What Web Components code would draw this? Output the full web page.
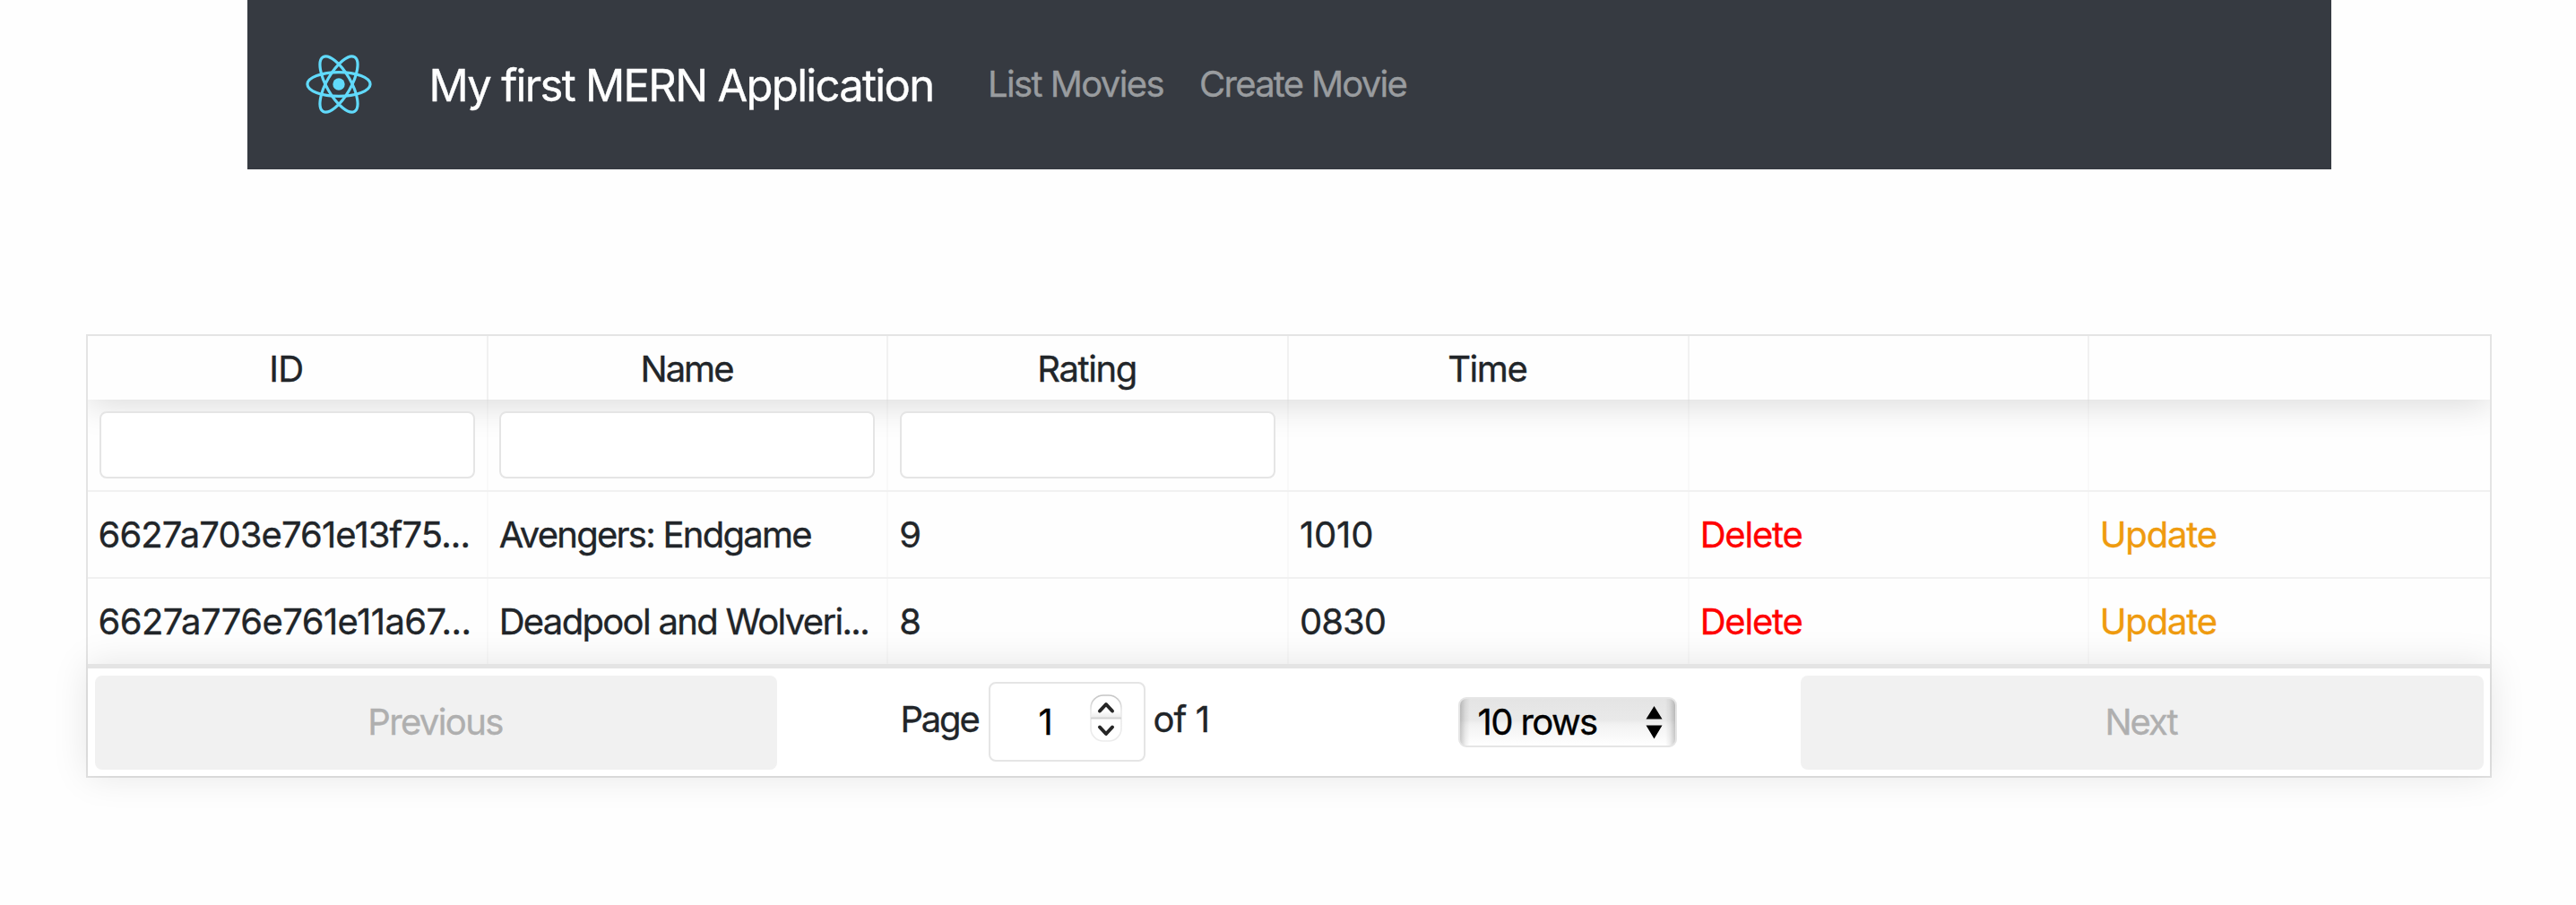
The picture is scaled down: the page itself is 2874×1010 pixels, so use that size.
<!DOCTYPE html>
<html lang="en">
<head>
<meta charset="utf-8">
<title>My first MERN Application</title>
<style>
body{margin:0;background:#fefefe;font:40px/60px Inter,"Liberation Sans",sans-serif;color:#212529;width:2874px;height:1010px;overflow:hidden;-webkit-text-stroke:.35px currentColor}
</style>
</head>
<body>
<movies-page></movies-page>
<script>
const define=(name,html,setup)=>customElements.define(name,class extends HTMLElement{
  constructor(){super();this.attachShadow({mode:'open'}).innerHTML=html;}
  connectedCallback(){if(setup)setup(this,this.shadowRoot);}
});
const spacing=(el,root)=>{if(el.hasAttribute('ls'))el.style.letterSpacing=el.getAttribute('ls')+'px';};

define('react-logo',`<style>:host{display:block;width:74px;height:66px}svg{display:block;width:100%;height:100%}</style>
<svg viewBox="-11.6 -10.35 23.2 20.7" fill="none" stroke="#61dafb"><circle r="2.1" fill="#61dafb" stroke="none"/><ellipse rx="11" ry="4.2"/><ellipse rx="11" ry="4.2" transform="rotate(60)"/><ellipse rx="11" ry="4.2" transform="rotate(120)"/></svg>`);

define('nav-link',`<style>:host{display:block;color:#999c9f;white-space:nowrap}</style><slot></slot>`,spacing);

define('nav-bar',`<style>
:host{display:flex;box-sizing:border-box;height:189px;margin:0 273px 0 276px;background:#363a41;padding-left:65px;align-items:flex-start}
react-logo{margin-top:60.500px}
.brand{font-size:49px;line-height:74px;letter-spacing:-1.71px;color:#fff;margin:58.500px 0 0 63.5px;white-space:nowrap;width:623.500px}
.links{display:flex;margin-top:64px}
.links nav-link:first-child{width:236px}
</style><react-logo></react-logo><div class="brand">My first MERN Application</div>
<div class="links"><nav-link ls="-1.61">List Movies</nav-link><nav-link ls="-1.73">Create Movie</nav-link></div>`);

define('table-cell',`<style>
:host{display:block;box-sizing:border-box;flex:none;width:calc(100% / 6);padding:17.5px 12px;border-right:2px solid rgba(0,0,0,.02);white-space:nowrap;overflow:hidden}
:host(:last-child){border-right-color:transparent}
:host([head]){padding:6.5px 13px 4.5px 11px;text-align:center;border-right-color:rgba(0,0,0,.05)}
:host([head]:last-child){border-right-color:transparent}
:host([filter]){padding:13px 13px 13px 12.7px}
:host([idcol]){padding-left:11.5px;padding-right:0}
:host([kind=delete]){color:#f00}
:host([kind=update]){color:#ef9b0f;padding-left:11.500px}
</style><slot></slot>`,spacing);

define('filter-input',`<style>:host{display:block;position:relative;box-sizing:border-box;height:75px;background:#fff;border:2px solid #e5e5e5;border-radius:8px}</style>`);

define('table-row',`<style>
:host{display:flex;box-sizing:border-box;border-bottom:2px solid rgba(0,0,0,.05);height:97px}
:host([head]){height:71px;border:0;position:relative;box-shadow:0 5px 39px rgba(0,0,0,.15)}
:host([filter]){height:103px}
:host([last]){height:95px;border:0}
</style><slot></slot>`);

define('page-button',`<style>
:host{display:flex;box-sizing:border-box;align-items:center;justify-content:center;width:761px;height:105px;padding:0 2px 2px 0;border-radius:8px;background:#f1f1f1;color:#afafaf}
:host(:last-child){width:762px;padding-right:3px}
</style><slot></slot>`,spacing);

define('page-jump',`<style>
:host{display:flex;box-sizing:border-box;width:174.5px;height:89px;border:2px solid #e5e5e5;border-radius:8px;background:#fff;color:#000;padding:13px 0 0 53.500px}
span{width:56px;line-height:60px}
svg{display:block;width:39px;height:58px;margin-top:-3px}
</style><span>1</span>
<svg viewBox="0 0 39 58"><defs><linearGradient id="u" x1="0" y1="0" x2="0" y2="1"><stop offset="0" stop-color="#c4c4c4"/><stop offset=".35" stop-color="#e9e9e9"/><stop offset="1" stop-color="#ececec"/></linearGradient><linearGradient id="m" x1="0" y1="0" x2="0" y2="1"><stop offset="0" stop-color="#fff"/><stop offset="1" stop-color="#ececec"/></linearGradient></defs>
<rect x="2" y="3" width="34" height="51" rx="14" fill="#fff" stroke="url(#u)" stroke-width="1.6"/>
<rect x="3" y="20" width="32" height="8" fill="url(#m)"/><rect x="2" y="27.5" width="34" height="2" fill="#d4d4d4"/><path d="M12 20.500L19 13L26 20.500M12 38.500L19 46L26 38.500" fill="none" stroke="#262626" stroke-width="4" stroke-linecap="round" stroke-linejoin="round"/></svg>`);

define('page-size',`<style>
:host{display:flex;box-sizing:border-box;width:244px;height:56px;border:2px solid #e5e5e5;border-radius:9px;color:#000;letter-spacing:-1.6px;
background:linear-gradient(90deg,rgba(0,0,0,.2),rgba(0,0,0,.06) 6px,transparent 11px,transparent calc(100% - 11px),rgba(0,0,0,.06) calc(100% - 6px),rgba(0,0,0,.2)),linear-gradient(#e4e4e4,#e9e9e9 45%,#f2f2f2 55%,#fff);padding-left:19.500px}
span{width:187px;line-height:51px}
svg{display:block;width:19px;height:38px;margin-top:8px}
</style><span>10 rows</span><svg viewBox="0 0 19 38"><path d="M9.500 0L18.500 14.500H.5ZM9.500 36.500L18.500 21.500H.5Z" fill="#000"/></svg>`);

define('table-pagination',`<style>
:host{display:flex;box-sizing:border-box;position:relative;height:125px;border-top:5px solid #e4e4e4;background:#fff;padding:8px 7px 7px 8px;box-shadow:0 0 39px rgba(0,0,0,.1)}
.center{display:flex;flex:1;padding-left:137.500px;align-items:flex-start}
.t{white-space:nowrap;margin-top:18.500px}
.page{width:98.500px;letter-spacing:-2.2px}
.of{margin-left:9px;width:340.500px;letter-spacing:-.9px}
page-jump{margin-top:7px}page-size{margin-top:24px}
</style><page-button ls="-1.6">Previous</page-button>
<div class="center"><span class="t page">Page</span><page-jump></page-jump><span class="t of">of 1</span><page-size></page-size></div>
<page-button ls="-2.06">Next</page-button>`);

define('movies-table',`<style>
:host{display:block;box-sizing:border-box;width:2684px;margin:184px 0 0 96px;border:2px solid rgba(0,0,0,.1)}
.body{overflow:hidden}
</style><div class="body">
<table-row head><table-cell head ls="-.7">ID</table-cell><table-cell head ls="-2">Name</table-cell><table-cell head ls="-1.4">Rating</table-cell><table-cell head ls="-1.4">Time</table-cell><table-cell head></table-cell><table-cell head></table-cell></table-row>
<table-row filter><table-cell filter><filter-input></filter-input></table-cell><table-cell filter><filter-input></filter-input></table-cell><table-cell filter><filter-input></filter-input></table-cell><table-cell filter></table-cell><table-cell filter></table-cell><table-cell filter></table-cell></table-row>
<table-row><table-cell idcol ls="-.9">6627a703e761e13f75...</table-cell><table-cell ls="-1.75">Avengers: Endgame</table-cell><table-cell>9</table-cell><table-cell ls="-.2">1010</table-cell><table-cell kind="delete" ls="-1.18">Delete</table-cell><table-cell kind="update" ls="-1.18">Update</table-cell></table-row>
<table-row last><table-cell idcol ls="-.57">6627a776e761e11a67...</table-cell><table-cell ls="-1.68">Deadpool and Wolveri...</table-cell><table-cell>8</table-cell><table-cell ls="-1">0830</table-cell><table-cell kind="delete" ls="-1.18">Delete</table-cell><table-cell kind="update" ls="-1.18">Update</table-cell></table-row>
</div><table-pagination></table-pagination>`);

define('movies-page',`<style>:host{display:block}</style><nav-bar></nav-bar><movies-table></movies-table>`);
</script>
</body>
</html>
